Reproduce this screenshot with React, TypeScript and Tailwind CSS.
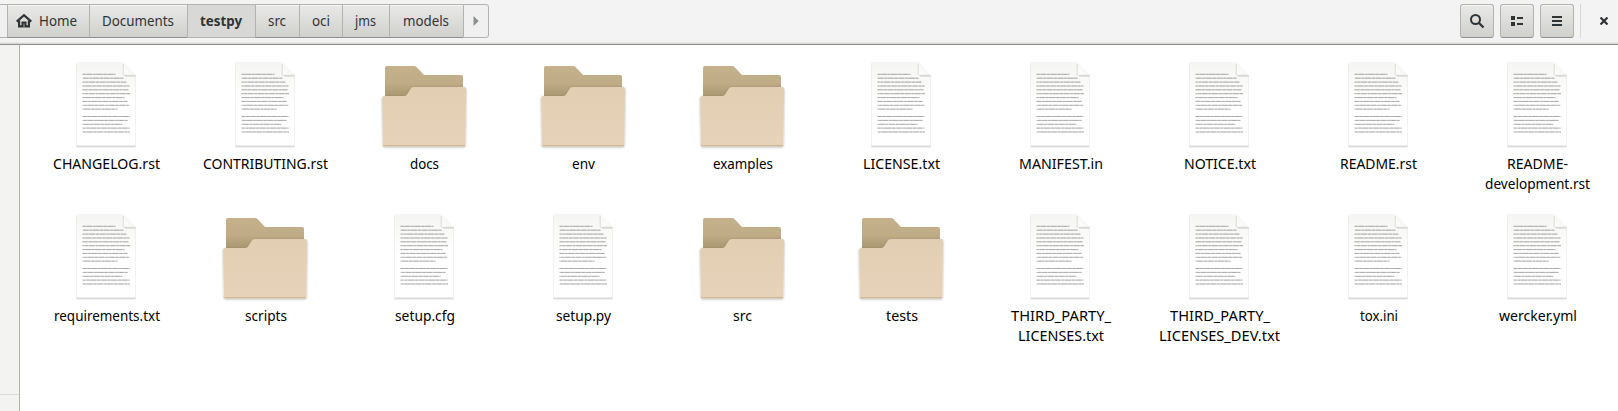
import type { ReactNode } from "react";

const files: { name: string[]; w: number[]; folder?: boolean }[] = [
  { name: ["CHANGELOG.rst"], w: [107] },
  { name: ["CONTRIBUTING.rst"], w: [125] },
  { name: ["docs"], w: [29], folder: true },
  { name: ["env"], w: [23], folder: true },
  { name: ["examples"], w: [60], folder: true },
  { name: ["LICENSE.txt"], w: [77] },
  { name: ["MANIFEST.in"], w: [84] },
  { name: ["NOTICE.txt"], w: [72] },
  { name: ["README.rst"], w: [77] },
  { name: ["README-", "development.rst"], w: [61, 105] },
  { name: ["requirements.txt"], w: [106] },
  { name: ["scripts"], w: [42], folder: true },
  { name: ["setup.cfg"], w: [60] },
  { name: ["setup.py"], w: [55] },
  { name: ["src"], w: [19], folder: true },
  { name: ["tests"], w: [32], folder: true },
  { name: ["THIRD_PARTY_", "LICENSES.txt"], w: [100, 86] },
  { name: ["THIRD_PARTY_", "LICENSES_DEV.txt"], w: [100, 121] },
  { name: ["tox.ini"], w: [38] },
  { name: ["wercker.yml"], w: [78] },
];

const textLines: [number, number][] = [
  [12.3, 33], [16.2, 41], [20.1, 44], [24, 47], [27.8, 46], [31.7, 47.5], [35.6, 42], [39.4, 45], [43.3, 47], [47.1, 35],
  [54.5, 47], [58.4, 45], [62.3, 40], [66.1, 47], [70, 47.5],
];

function DocIcon() {
  return (
    <svg width="64" height="90" viewBox="-2 -2 64 90">
      <defs>
        <linearGradient id="paper" x1="0" y1="0" x2="0" y2="1">
          <stop offset="0" stopColor="#f5f5f3" />
          <stop offset="0.5" stopColor="#ffffff" />
        </linearGradient>
        <linearGradient id="fold" x1="0" y1="1" x2="0.5" y2="0.5">
          <stop offset="0" stopColor="#ffffff" />
          <stop offset="1" stopColor="#f7f7f6" />
        </linearGradient>
        <filter id="paperShadow" x="-10%" y="-10%" width="120%" height="120%">
          <feDropShadow dx="0" dy="0.6" stdDeviation="0.7" floodColor="#000" floodOpacity="0.42" />
        </filter>
      </defs>
      <path d="M1 .5H47.500L59.500 13V83.700Q59.500 84.200 59 84.200H1Q.5 84.200 .5 83.700V1Q.5 .5 1 .5Z" fill="url(#paper)" filter="url(#paperShadow)" />
      <path d="M.5 84H59.500" stroke="#cfcfcf" strokeWidth=".8" />
      <path d="M49 14H59.500" stroke="#000" strokeOpacity=".12" strokeWidth="1.500" />
      <path d="M47.300 1V12.300Q47.300 13.200 48.200 13.200H59.300Z" fill="url(#fold)" />
      <path d="M47.200 2V12.300Q47.200 13.300 48.200 13.300H59.500" fill="none" stroke="#bdbdbb" strokeWidth=".7" strokeOpacity=".75" />
      {textLines.map(([y, w], i) => (
        <g key={i} fill="none" stroke="#707070">
          <path d={`M6.500 ${y}H${w + 6.5}`} strokeWidth=".9" strokeOpacity=".42" />
          <path d={`M6.500 ${y}H${w + 6.5}`} strokeWidth=".9" strokeOpacity=".4" strokeDasharray="3.300 1 5.200 1.200 2.300 .9 6 1" strokeDashoffset={i * 3.7} />
        </g>
      ))}
    </svg>
  );
}

function FolderIcon() {
  return (
    <svg width="88" height="90" viewBox="-2 -2 88 90">
      <defs>
        <linearGradient id="back" x1="0" y1="0" x2="0" y2="1">
          <stop offset="0" stopColor="#c4b18c" />
          <stop offset="0.22" stopColor="#c0ad88" />
          <stop offset="0.4" stopColor="#a8966f" />
        </linearGradient>
        <linearGradient id="front" x1="0" y1="0" x2="0" y2="1">
          <stop offset="0" stopColor="#e2cfb3" />
          <stop offset="1" stopColor="#e5d2b9" />
        </linearGradient>
        <filter id="folderShadow" x="-10%" y="-10%" width="120%" height="120%">
          <feDropShadow dx="0" dy="0.9" stdDeviation="0.9" floodColor="#000" floodOpacity="0.35" />
        </filter>
      </defs>
      <path d="M5 4H32Q33.500 4 34.500 5L42 13H79Q81 13 81 15V80H3V6Q3 4 5 4Z" fill="url(#back)" />
      <path d="M2 34H22Q24 34 25 32.500L28.500 27Q29.500 25 32 25H82Q84 25 84 27L83.300 83Q83.300 84.300 82 84.300H2.500Q1 84.300 1 83L.2 36Q.2 34 2 34Z" fill="url(#front)" filter="url(#folderShadow)" />
      <path d="M1.300 83.700H83" stroke="#cbb191" strokeWidth="1.100" />
    </svg>
  );
}

function Label({ text, width }: { text: string; width: number }) {
  return (
    <svg width={width} height="20" className="block overflow-visible">
      <text x="0" y="15" textLength={width} lengthAdjust="spacingAndGlyphs" className="fill-black text-[14.7px]">{text}</text>
    </svg>
  );
}

function FileItem({ name, w, folder }: { name: string[]; w: number[]; folder?: boolean }) {
  return (
    <div className="flex h-[152px] w-[159px] flex-col items-center">
      <div className="mr-[2px] flex h-[94px] items-start">{folder ? <FolderIcon /> : <DocIcon />}</div>
      {name.map((n, i) => <Label key={n} text={n} width={w[i]} />)}
    </div>
  );
}

function HeaderButton({ children }: { children: ReactNode }) {
  return (
    <button className="flex h-[34px] w-[34px] items-center justify-center rounded-[3px] border border-[#b2b2ae] border-b-[#8e8e8a] bg-linear-to-b from-[#e9e9e7] to-[#d0d0cd] shadow-[inset_0_1px_#f7f7f7]">
      {children}
    </button>
  );
}

const crumbs = [
  { t: "Home", cls: "w-[82px] pr-[4px]", w: 38 },
  { t: "Documents", cls: "w-[98px] pr-[2px]", w: 72 },
  { t: "testpy", cls: "w-[68px] pr-[1px]", w: 42, active: true },
  { t: "src", cls: "w-[44px] pr-[1px]", w: 18 },
  { t: "oci", cls: "w-[43px]", w: 18 },
  { t: "jms", cls: "w-[47px] pr-[2px]", w: 21 },
  { t: "models", cls: "w-[74px] pr-[1px]", w: 46 },
];

export default function App() {
  return (
    <div className="flex h-[411px] w-[1618px] flex-col overflow-hidden bg-white font-['Noto_Sans','Open_Sans',sans-serif]">
      <header className="flex h-[45px] shrink-0 items-start border-b border-[#91918d] bg-[#f3f3f3] pt-1 shadow-[inset_0_-1px_#d9d9d7,inset_0_-2px_#e8e8e7]">
        <div className="flex h-[34px] w-[7px] border-y border-[#b2b2ae] bg-[#f0f0f0]" />
        <nav className="flex h-[34px]">
          {crumbs.map((c) => (
            <div
              key={c.t}
              className={`flex items-center justify-center gap-[7px] border-y border-l border-[#b2b2ae] ${c.cls} ${
                c.active ? "bg-[#d8d8d6]" : "border-b-[#8e8e8a] bg-linear-to-b from-[#e9e9e7] to-[#d0d0cd] shadow-[inset_0_1px_#f7f7f7]"
              }`}
            >
              {c.t === "Home" && (
                <svg width="16" height="16" viewBox="0 0 16 16" fill="none" stroke="#2e3436" strokeWidth="2.200">
                  <path d="M.7 8.600 8 2.200l7.300 6.400" />
                  <path d="M3.100 7.500V13.400H6.600V9.500h2.800v3.900h3.500V7.500" />
                </svg>
              )}
              <svg width={c.w} height="20" className="overflow-visible">
                <text x="0" y="15" textLength={c.w} lengthAdjust="spacingAndGlyphs" className={c.active ? "fill-[#2e3436] text-[14.7px] font-bold" : "fill-[#2e3436] text-[14.7px]"}>
                  {c.t}
                </text>
              </svg>
            </div>
          ))}
          <div className="flex w-[26px] items-center justify-center rounded-r-[3px] border border-[#b2b2ae] bg-[#f0f0f0]">
            <svg width="6" height="10" viewBox="0 0 6 10"><path d="M.5 0 5.700 5 .5 10Z" fill="#8b8e8f" /></svg>
          </div>
        </nav>
        <div className="ml-auto flex h-[34px] items-center">
          <div className="flex gap-[6px]">
            <HeaderButton>
              <svg width="16" height="16" viewBox="0 0 16 16" fill="none" stroke="#2e3436">
                <circle cx="6.500" cy="6.500" r="4.500" strokeWidth="2" /><path d="m10 10 4.500 4.500" strokeWidth="2.300" />
              </svg>
            </HeaderButton>
            <HeaderButton>
              <svg width="14" height="12" viewBox="0 0 14 12" fill="#2e3436">
                <path d="M1 1h4v4H1zM7 2h6v2H7zM1 7h4v4H1zM7 8h6v2H7z" />
              </svg>
            </HeaderButton>
            <HeaderButton>
              <svg width="12" height="12" viewBox="0 0 12 12" fill="#2e3436">
                <path d="M1 1h10v2H1zM1 5h10v2H1zM1 9h10v2H1z" />
              </svg>
            </HeaderButton>
          </div>
          <div className="ml-[6px] h-[34px] w-px bg-[#d8d8d8]" />
          <svg className="mr-[10px] ml-[19px]" width="8" height="8" viewBox="0 0 8 8" stroke="#2e3436" strokeWidth="2.200"><path d="m.5 .5 7 7M7.500 .5.5 7.500" /></svg>
        </div>
      </header>
      <div className="flex min-h-0 flex-1">
        <aside className="flex w-5 shrink-0 flex-col border-r border-[#b2b2ae] bg-[#f3f3f2]">
          <div className="h-[350px] border-b border-[#d9d9d7]" />
        </aside>
        <main className="grid w-[1598px] shrink-0 grid-cols-[repeat(10,159px)] content-start pt-[15px] pl-[7px]">
          {files.map((f) => <FileItem key={f.name.join("")} {...f} />)}
        </main>
      </div>
    </div>
  );
}
